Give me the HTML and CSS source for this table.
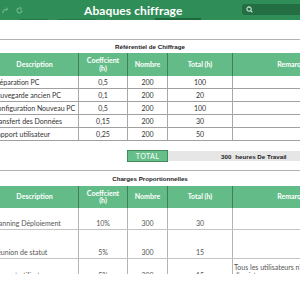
FILE: index.html
```html
<!DOCTYPE html>
<html lang="fr">
<head>
<meta charset="utf-8">
<title>Abaques chiffrage</title>
<link rel="stylesheet" href="styles.css">
</head>
<body>
<header class="topbar">
  <div class="icons">
    <svg class="ico" width="7" height="7" viewBox="0 0 8 8"><path d="M1 7 C1 3.5 3 2.5 6 2.5" fill="none" stroke="#74b98f" stroke-width="1.2"/><path d="M4.5 0.8 L6.6 2.5 L4.5 4.2" fill="none" stroke="#74b98f" stroke-width="1.1"/></svg>
    <svg class="ico" width="7" height="7" viewBox="0 0 8 8"><path d="M6.6 3.2 A2.8 2.8 0 1 1 5.2 1.5" fill="none" stroke="#74b98f" stroke-width="1.2"/><path d="M4.2 0.4 L6.2 1.4 L5 3.2" fill="none" stroke="#74b98f" stroke-width="1"/></svg>
  </div>
  <div class="title">Abaques chiffrage</div>
  <div class="search">
    <svg width="7" height="7" viewBox="0 0 8 8"><circle cx="3.5" cy="3.5" r="2.5" fill="none" stroke="#d3e8da" stroke-width="1.2"/><path d="M5.3 5.3 L7.3 7.3" stroke="#d3e8da" stroke-width="1.3"/></svg>
  </div>
  <span class="tabline t1"></span>
  <span class="tabline t2"></span>
  <span class="tabline t3"></span>
</header>

<main class="sheet">
  <div class="gap"></div>
  <div class="sec-title">Référentiel de Chiffrage</div>
  <div class="grid">
    <div class="hdr">Description</div>
    <div class="hdr">Coeffcient<br>(h)</div>
    <div class="hdr">Nombre</div>
    <div class="hdr">Total (h)</div>
    <div class="hdr last">Remarques</div>

    <div class="d">Préparation PC</div><div>0,5</div><div>200</div><div>100</div><div class="last"></div>
    <div class="d">Sauvegarde ancien PC</div><div>0,1</div><div>200</div><div>20</div><div class="last"></div>
    <div class="d">Configuration Nouveau PC</div><div>0,5</div><div>200</div><div>100</div><div class="last"></div>
    <div class="d">Transfert des Données</div><div>0,15</div><div>200</div><div>30</div><div class="last"></div>
    <div class="d">Rapport utilisateur</div><div>0,25</div><div>200</div><div>50</div><div class="last"></div>
  </div>

  <div class="total">
    <div class="tbox">TOTAL</div>
    <div class="tbar"><span>300</span><span>heures De Travail</span></div>
  </div>

  <div class="sec-title sec2">Charges Proportionnelles</div>
  <div class="grid grid2">
    <div class="hdr">Description</div>
    <div class="hdr">Coeffcient<br>(h)</div>
    <div class="hdr">Nombre</div>
    <div class="hdr">Total (h)</div>
    <div class="hdr last">Remarques</div>

    <div class="d r1">Planning Déploiement</div><div class="r1">10%</div><div class="r1">300</div><div class="r1">30</div><div class="r1 last"></div>
    <div class="d r2">Réunion de statut</div><div class="r2">5%</div><div class="r2">300</div><div class="r2">15</div><div class="r2 last"></div>
    <div class="d r3">Support utilisateurs</div><div class="r3">5%</div><div class="r3">300</div><div class="r3">15</div><div class="r3 last note">Tous les utilisateurs n'auront pas besoin d'assistance</div>
  </div>
</main>
</body>
</html>
```
FILE: styles.css
```css
html, body {
  margin: 0;
  padding: 0;
  background: #fff;
}
body {
  width: 300px;
  height: 300px;
  overflow: hidden;
  font-family: Lato, "Liberation Sans", sans-serif;
}

.topbar {
  position: relative;
  height: 20px;
  background: #2f8e58;
  display: flex;
  align-items: center;
}
.icons {
  display: flex;
  gap: 7px;
  padding-left: 2px;
  width: 84px;
  box-sizing: border-box;
}
.ico { display: block; }
.title {
  font-weight: 700;
  font-size: 12px;
  color: #fff;
  letter-spacing: 0.1px;
}
.search {
  margin-left: auto;
  align-self: flex-start;
  margin-top: 4px;
  margin-right: -4px;
  width: 62px;
  height: 11px;
  background: #236e42;
  border-radius: 3px;
  display: flex;
  align-items: center;
  padding-left: 4px;
  box-sizing: border-box;
}
.search svg { display: block; }
.tabline {
  position: absolute;
  bottom: 0;
  height: 1px;
  background: #25764a;
}
.t1 { left: 155px; width: 46px; height: 2px; background: #20693f; }
.t2 { left: 20px; width: 28px; }
.t3 { left: 58px; width: 38px; }

.sheet {
  height: 254px;
  overflow: hidden;
}
.gap { height: 19px; }

.sec-title {
  border-top: 1px solid #b3b3b3;
  height: 13px;
  display: flex;
  align-items: center;
  justify-content: center;
  font-family: "Liberation Sans", sans-serif;
  font-weight: 700;
  font-size: 6.2px;
  color: #222;
}
.sec2 { height: 15px; }

.grid {
  display: grid;
  grid-template-columns: 88px 49px 40px 65px 124px;
  margin-left: -9px;
}
.grid > div {
  box-sizing: border-box;
  height: 13px;
  border-right: 1px solid #a8a8a8;
  border-bottom: 1px solid #a0a0a0;
  font-size: 7px;
  color: #333;
  display: flex;
  align-items: center;
  justify-content: center;
  white-space: nowrap;
}
.grid > .d {
  justify-content: flex-start;
  padding-left: 2px;
}
.grid > .hdr {
  height: 23px;
  background: #63bc87;
  color: #fff;
  font-weight: 700;
  font-size: 7px;
  line-height: 7.5px;
  text-align: center;
  border-right: 1px solid #3f8058;
  border-bottom: none;
  white-space: normal;
}

.total {
  display: flex;
  align-items: center;
  margin: 9px 0 8px 127px;
  height: 12px;
}
.tbox {
  width: 41px;
  height: 12px;
  box-sizing: border-box;
  background: #66bf8a;
  border: 1px solid #3f8b5c;
  color: #fff;
  font-size: 7px;
  letter-spacing: 0.4px;
  display: flex;
  align-items: center;
  justify-content: center;
}
.tbar {
  flex: 1;
  height: 10px;
  background: #e6e6e6;
  padding-left: 53px;
  display: flex;
  align-items: center;
  gap: 4px;
  font-family: "Liberation Sans", sans-serif;
  font-weight: 700;
  font-size: 6.2px;
  color: #222;
}

.grid2 > .hdr { height: 22px; }
.grid2 > div {
  color: #555;
  border-bottom: 1px solid #c4c4c4;
  border-right: 1px solid #b4b4b4;
  align-items: flex-end;
  padding-bottom: 2px;
}
.grid2 > .hdr { align-items: center; padding-bottom: 0; border-right-color: #3f8058; }
.grid2 > .r1 { height: 22px; }
.grid2 > .r2 { height: 29px; }
.grid2 > .r3 { height: 23px; }
.grid2 > .note {
  align-items: flex-start;
  justify-content: flex-start;
  white-space: normal;
  padding: 4px 0 0 1px;
  line-height: 8px;
}
```
